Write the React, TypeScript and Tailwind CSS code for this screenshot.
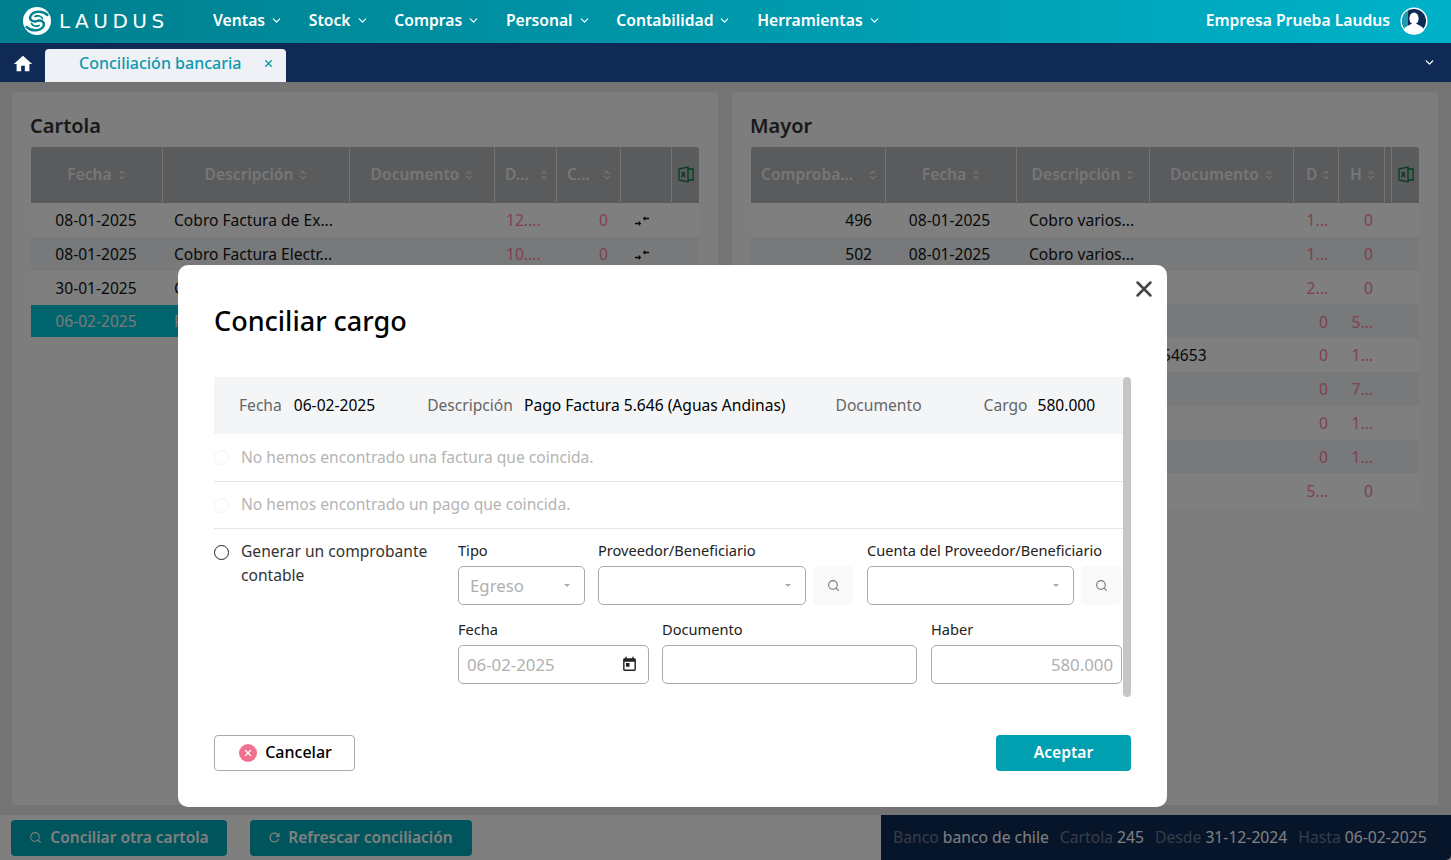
import { ChevronDown, Search, X } from "lucide-react";
import { MdHome, MdRefresh, MdToday } from "react-icons/md";

const NAV = ["Ventas", "Stock", "Compras", "Personal", "Contabilidad", "Herramientas"];

const CARTOLA_COLS = "grid-cols-[132px_187px_145px_62px_64px_51px_27px]";
const MAYOR_COLS = "grid-cols-[135px_131px_133px_144px_45px_46px_7px_27px]";

const CARTOLA_ROWS = [
  ["08-01-2025", "Cobro Factura de Ex...", "12....", "0"],
  ["08-01-2025", "Cobro Factura Electr...", "10....", "0"],
  ["30-01-2025", "Cobro", "", ""],
  ["06-02-2025", "Pago", "", ""],
];

const MAYOR_ROWS = [
  ["496", "08-01-2025", "Cobro varios...", "", "1...", "0"],
  ["502", "08-01-2025", "Cobro varios...", "", "1...", "0"],
  ["", "", "", "", "2...", "0"],
  ["", "", "", "", "0", "5..."],
  ["", "", "", "54653", "0", "1..."],
  ["", "", "", "", "0", "7..."],
  ["", "", "", "", "0", "1..."],
  ["", "", "", "", "0", "1..."],
  ["", "", "", "", "5...", "0"],
];

function SortIcon() {
  return (
    <svg width="8" height="10" viewBox="0 0 8 10" fill="none" stroke="currentColor" strokeWidth="1.1" className="shrink-0">
      <path d="M1.5 3.8 4 1.3l2.5 2.5M1.5 6.2 4 8.7l2.5-2.5" />
    </svg>
  );
}

function ExcelIcon() {
  return (
    <svg width="16" height="17" viewBox="0 0 16 17" fill="none" stroke="#0f7a3a" strokeWidth="1.3">
      <path d="M1 3 10 1v15l-9-2z" />
      <path d="M10 3h5v11h-5" />
      <path d="M3.7 6 7 11M7 6l-3.3 5" strokeWidth="1.4" />
    </svg>
  );
}

function MatchIcon() {
  return (
    <svg width="14" height="10" viewBox="0 0 14 10" fill="none" stroke="#111" strokeWidth="1.3">
      <path d="M0 7.5h6M4.300 5.600v3.800M14 2.500H8M9.700.8v3.400" />
    </svg>
  );
}

function Logo() {
  return (
    <svg width="28" height="28" viewBox="0 0 28 28" fill="none" stroke="#00838f" strokeLinecap="round">
      <circle cx="14" cy="14" r="14" fill="#fff" stroke="none" />
      <path d="M24.500 8C19 3 10 4 7.500 9c-1.800 4 2.500 6.500 6.500 5" strokeWidth="2.400" />
      <path d="M3.500 20c5.500 5 14.500 4 17-1 1.800-4-2.500-6.500-6.500-5" strokeWidth="2.400" />
      <path d="M19.500 11.500c-1-2.500-5-3.500-7.500-2" strokeWidth="1.800" />
      <path d="M8.500 16.500c1 2.500 5 3.500 7.500 2" strokeWidth="1.800" />
    </svg>
  );
}

function Avatar() {
  return (
    <svg width="28" height="28" viewBox="0 0 28 28">
      <circle cx="14" cy="14" r="13.500" fill="#fff" />
      <circle cx="14" cy="14" r="12" fill="#0f2a55" />
      <path d="M14 2a12 12 0 0 0-12 12 12 12 0 0 0 6 10.400V2.800z" fill="#1a9cb0" />
      <ellipse cx="14" cy="11.500" rx="4.600" ry="6" fill="#fff" />
      <path d="M3.500 23c2-4 6-4.500 7.500-6h6c1.500 1.500 5.500 2 7.500 6-2.500 3-6 4.500-10.500 4.500S6 26 3.500 23z" fill="#fff" />
    </svg>
  );
}

function HeadCell({ label, layout }: { label: string; layout?: string }) {
  return (
    <div className={`flex items-center border-r border-[#e8e8e8] ${layout ?? "justify-center gap-[6px]"}`}>
      <span>{label}</span>
      <SortIcon />
    </div>
  );
}

function CartolaTable() {
  return (
    <div className="w-[668px]">
      <div className={`grid ${CARTOLA_COLS} h-[56px] rounded-t-[3px] bg-[#b4b6ba] pb-px text-[15.600px] font-semibold text-[#ececec]`}>
        <HeadCell label="Fecha" />
        <HeadCell label="Descripción" />
        <HeadCell label="Documento" />
        <HeadCell label="D..." layout="justify-between pl-[10px] pr-[8px]" />
        <HeadCell label="C..." layout="justify-between pl-[10px] pr-[9px]" />
        <div className="border-r border-[#e8e8e8]" />
        <div className="flex items-center justify-center">
          <ExcelIcon />
        </div>
      </div>
      {CARTOLA_ROWS.map((r, i) => {
        const selected = i === 3;
        const rowBg = selected
          ? "h-[32px] bg-[#00c8d8] pt-px text-[#f4f4f4]"
          : i % 2
            ? "h-[34px] bg-[#eef2f4] pt-[2px] text-[#111]"
            : "h-[34px] bg-white pt-[2px] text-[#111]";
        return (
          <div key={i} className={`grid ${CARTOLA_COLS} items-center text-[15.600px] ${rowBg}`}>
            <div className="pr-[2px] text-center">{r[0]}</div>
            <div className="pl-[11px] whitespace-nowrap">{r[1]}</div>
            <div />
            <div className="pl-[11px] text-[#ff80a8]">{r[2]}</div>
            <div className="pr-[13px] text-right text-[#ff80a8]">{r[3]}</div>
            <div className="pl-[14px]">{i < 2 && <MatchIcon />}</div>
            <div />
          </div>
        );
      })}
    </div>
  );
}

function MayorTable() {
  return (
    <div className="w-[668px]">
      <div className={`grid ${MAYOR_COLS} h-[56px] rounded-t-[3px] bg-[#b4b6ba] pb-px text-[15.600px] font-semibold text-[#ececec]`}>
        <HeadCell label="Comproba..." layout="justify-between pl-[10px] pr-[8px]" />
        <HeadCell label="Fecha" />
        <HeadCell label="Descripción" />
        <HeadCell label="Documento" />
        <HeadCell label="D" layout="justify-between pl-[12px] pr-[8px]" />
        <HeadCell label="H" layout="justify-between pl-[11px] pr-[9px]" />
        <div className="border-r border-[#e8e8e8]" />
        <div className="flex items-center justify-center">
          <ExcelIcon />
        </div>
      </div>
      {MAYOR_ROWS.map((r, i) => (
        <div
          key={i}
          className={`grid ${MAYOR_COLS} h-[33.800px] items-center pt-[2px] text-[15.600px] text-[#111] ${i % 2 ? "bg-[#eef2f4]" : "bg-white"}`}
        >
          <div className="pr-[14px] text-right">{r[0]}</div>
          <div className="pr-[4px] text-center">{r[1]}</div>
          <div className="pl-[12px] whitespace-nowrap">{r[2]}</div>
          <div className="pl-[12px]">{r[3]}</div>
          <div className="pr-[11px] text-right text-[#ff80a8]">{r[4]}</div>
          <div className="pr-[12px] text-right text-[#ff80a8]">{r[5]}</div>
          <div />
          <div />
        </div>
      ))}
    </div>
  );
}

function Panel({ title, children }: { title: string; children: React.ReactNode }) {
  return (
    <section className="h-[713px] w-[706px] rounded-t-[4px] bg-[#fafafa] pl-[19px] pt-[19px]">
      <h2 className="-ml-px h-[36px] text-[20px] leading-[30px] font-semibold text-[#333]">{title}</h2>
      {children}
    </section>
  );
}

function Field({ label, width, children }: { label: string; width: string; children: React.ReactNode }) {
  return (
    <div className={`flex shrink-0 flex-col ${width}`}>
      <label className="h-[26px] text-[14.600px] leading-[20px] whitespace-nowrap text-[#222]">{label}</label>
      {children}
    </div>
  );
}

function SelectBox({ value }: { value?: string }) {
  return (
    <div className="flex h-[39px] items-center justify-between rounded-[5px] border border-[#aaa] pl-[11px] pr-[14px] text-[16.800px] text-[#b0b0b0]">
      <span>{value}</span>
      <span className="h-0 w-0 border-x-[3.500px] border-t-[3.500px] border-x-transparent border-t-[#aaa]" />
    </div>
  );
}

function SearchButton() {
  return (
    <div className="flex h-[39px] w-[40px] shrink-0 items-center justify-center rounded-[5px] bg-[#f9f9f9] text-[#777]">
      <Search size={13} strokeWidth={2} />
    </div>
  );
}

function Modal() {
  return (
    <div className="absolute left-[178px] top-[183px] h-[542px] w-[989px] rounded-[10px] bg-white px-[36px] pt-[36px] text-black">
      <button className="absolute right-[10px] top-[11px] text-[#444]">
        <X size={26} strokeWidth={2.300} />
      </button>
      <h1 className="h-[40px] text-[27px] leading-[40px] font-medium">Conciliar cargo</h1>

      <div className="mt-[36px] flex h-[320px] w-[917px]">
        <div className="w-[909px] overflow-hidden">
          <div className="flex h-[57px] items-center bg-[#f4f5f7] pl-[25px] text-[15.600px]">
            <span className="text-[#666]">Fecha</span>
            <span className="ml-[12px]">06-02-2025</span>
            <span className="ml-[52px] text-[#666]">Descripción</span>
            <span className="ml-[11px]">Pago Factura 5.646 (Aguas Andinas)</span>
            <span className="ml-[50px] text-[#666]">Documento</span>
            <span className="ml-[62px] text-[#666]">Cargo</span>
            <span className="ml-[10px]">580.000</span>
          </div>

          <div className="flex h-[48px] items-center gap-[12px] border-b border-[#e6e6e6] text-[15.600px] text-[#b4b4b4]">
            <span className="h-[15px] w-[15px] rounded-full border border-[#f2f2f2]" />
            <span>No hemos encontrado una factura que coincida.</span>
          </div>
          <div className="flex h-[47px] items-center gap-[12px] border-b border-[#e6e6e6] text-[15.600px] text-[#b4b4b4]">
            <span className="h-[15px] w-[15px] rounded-full border border-[#f2f2f2]" />
            <span>No hemos encontrado un pago que coincida.</span>
          </div>

          <div className="flex pt-[11px]">
            <div className="flex w-[244px] shrink-0 gap-[12px] text-[15.600px] leading-[24px] text-[#333]">
              <span className="mt-[5px] h-[15px] w-[15px] shrink-0 rounded-full border-[1.500px] border-[#222]" />
              <span className="-mt-[1px] w-[195px]">Generar un comprobante contable</span>
            </div>
            <div className="flex flex-col gap-[14px]">
              <div className="flex">
                <Field label="Tipo" width="w-[127px]">
                  <SelectBox value="Egreso" />
                </Field>
                <div className="ml-[13px] flex items-end gap-[7px]">
                  <Field label="Proveedor/Beneficiario" width="w-[208px]">
                    <SelectBox />
                  </Field>
                  <SearchButton />
                </div>
                <div className="ml-[14px] flex items-end gap-[7px]">
                  <Field label="Cuenta del Proveedor/Beneficiario" width="w-[207px]">
                    <SelectBox />
                  </Field>
                  <SearchButton />
                </div>
              </div>
              <div className="flex">
                <Field label="Fecha" width="w-[191px]">
                  <div className="flex h-[39px] items-center justify-between rounded-[5px] border border-[#aaa] pl-[8px] pr-[10px] text-[16.800px] text-[#b0b0b0]">
                    <span>06-02-2025</span>
                    <MdToday size={17} className="text-[#222]" />
                  </div>
                </Field>
                <div className="ml-[13px]">
                  <Field label="Documento" width="w-[255px]">
                    <div className="h-[39px] rounded-[5px] border border-[#aaa]" />
                  </Field>
                </div>
                <div className="ml-[14px]">
                  <Field label="Haber" width="w-[191px]">
                    <div className="flex h-[39px] items-center justify-end rounded-[5px] border border-[#aaa] pr-[8px] text-[16.800px] text-[#b0b0b0]">
                      580.000
                    </div>
                  </Field>
                </div>
              </div>
            </div>
          </div>
        </div>
        <div className="ml-auto h-full w-[8px] rounded-[4px] bg-[#c6c6c6]" />
      </div>

      <div className="mt-[38px] flex justify-between">
        <button className="flex h-[36px] w-[141px] items-center justify-center gap-[8px] rounded-[4px] border border-[#aaa] pb-[2px] pl-[2px] text-[16px] font-medium">
          <span className="mt-[2px] flex h-[18px] w-[18px] items-center justify-center rounded-full bg-[#f2708f] text-white">
            <X size={10} strokeWidth={3} />
          </span>
          Cancelar
        </button>
        <button className="h-[36px] w-[135px] rounded-[4px] bg-[#00a0b0] pb-px text-[15.600px] font-semibold text-white">Aceptar</button>
      </div>
    </div>
  );
}

export default function App() {
  return (
    <div className="relative flex h-screen w-full flex-col overflow-hidden bg-[#e8e8e8] font-['Noto_Sans',sans-serif]">
      <header className="flex h-[43px] shrink-0 items-center bg-linear-to-r from-[#007f8e] to-[#00b2c9] pb-[2px] pl-[23px] pr-[23px] text-white">
        <Logo />
        <span className="ml-[8px] w-[154px] font-['DejaVu_Sans',sans-serif] text-[20px] font-normal tracking-[4.500px]">LAUDUS</span>
        <nav className="flex gap-[25.700px] text-[15.700px] font-semibold">
          {NAV.map((item) => (
            <div key={item} className="flex items-center gap-[5px]">
              {item}
              <ChevronDown size={13} strokeWidth={2} />
            </div>
          ))}
        </nav>
        <div className="ml-auto flex items-center gap-[10px] text-[15.700px] font-semibold">
          Empresa Prueba Laudus
          <Avatar />
        </div>
      </header>

      <div className="flex h-[39px] shrink-0 items-end bg-[#0f2a55] pl-[12px] pr-[15px]">
        <MdHome size={22} className="mb-[7px] text-white" />
        <div className="ml-[11px] flex h-[33px] w-[241px] items-center rounded-t-[4px] bg-[#f0f1f6] pb-[5px] pl-[34px] pr-[12px] text-[16px] font-medium text-[#0b9aae]">
          Conciliación bancaria
          <X size={11} strokeWidth={3} className="ml-auto" />
        </div>
        <ChevronDown size={13} strokeWidth={2.500} className="mb-[13px] ml-auto text-white" />
      </div>

      <main className="flex flex-1 gap-[14px] px-[12px] pt-[10px]">
        <Panel title="Cartola">
          <CartolaTable />
        </Panel>
        <Panel title="Mayor">
          <MayorTable />
        </Panel>
      </main>

      <footer className="flex h-[45px] shrink-0 items-center bg-white pl-[11px]">
        <button className="flex h-[36px] w-[216px] items-center justify-center gap-[8px] rounded-[4px] bg-[#00a8b8] text-[15.500px] font-semibold text-white">
          <Search size={13} strokeWidth={2} />
          Conciliar otra cartola
        </button>
        <button className="ml-[23px] flex h-[36px] w-[222px] items-center justify-center gap-[6px] rounded-[4px] bg-[#00a8b8] pr-[2px] text-[15.500px] font-semibold text-white">
          <MdRefresh size={15} />
          Refrescar conciliación
        </button>
        <div className="ml-auto flex h-full w-[570px] items-center gap-[11px] rounded-br-[5px] bg-[#0f2a55] pl-[12px] text-[15.700px] text-white">
          <span><span className="text-[#6b7a92]">Banco</span> banco de chile</span>
          <span><span className="text-[#6b7a92]">Cartola</span> 245</span>
          <span><span className="text-[#6b7a92]">Desde</span> 31-12-2024</span>
          <span><span className="text-[#6b7a92]">Hasta</span> 06-02-2025</span>
        </div>
      </footer>

      <div className="absolute inset-x-0 bottom-0 top-[82px] bg-black/50">
        <Modal />
      </div>
    </div>
  );
}
